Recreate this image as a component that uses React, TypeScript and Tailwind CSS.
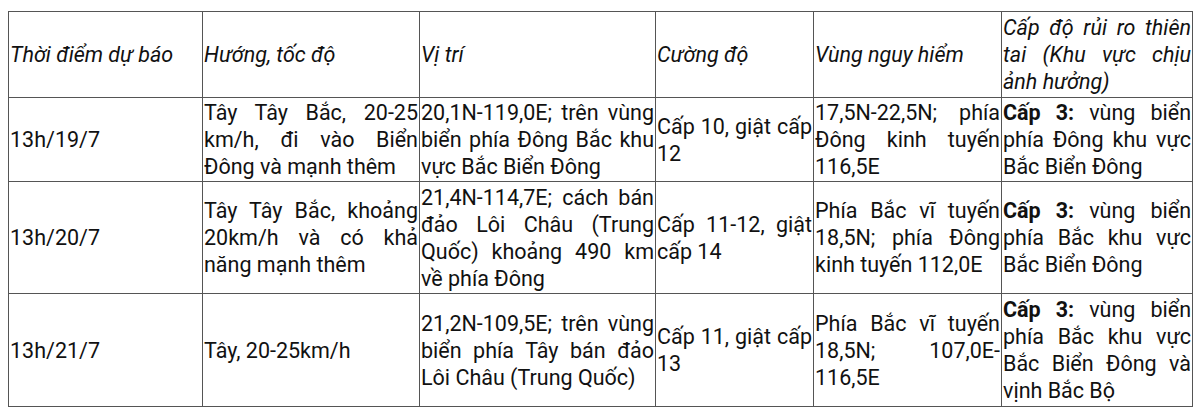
import React from 'react';

const cols = ['w-[194px]', 'w-[217px]', 'w-[236px]', 'w-[158px]', 'w-[188px]', 'w-[191px]'];

const headers = [
  'Thời điểm dự báo',
  'Hướng, tốc độ',
  'Vị trí',
  'Cường độ',
  'Vùng nguy hiểm',
  'Cấp độ rủi ro thiên tai (Khu vực chịu ảnh hưởng)',
];

type Row = {
  h: string;
  time: string;
  dir: string;
  pos: string;
  power: string;
  danger: string;
  risk: string;
};

const rows: Row[] = [
  {
    h: 'h-[84px]',
    time: '13h/19/7',
    dir: 'Tây Tây Bắc, 20-25 km/h, đi vào Biển Đông và mạnh thêm',
    pos: '20,1N-119,0E; trên vùng biển phía Đông Bắc khu vực Bắc Biển Đông',
    power: 'Cấp 10, giật cấp 12',
    danger: '17,5N-22,5N; phía Đông kinh tuyến 116,5E',
    risk: 'vùng biển phía Đông khu vực Bắc Biển Đông',
  },
  {
    h: 'h-[112px]',
    time: '13h/20/7',
    dir: 'Tây Tây Bắc, khoảng 20km/h và có khả năng mạnh thêm',
    pos: '21,4N-114,7E; cách bán đảo Lôi Châu (Trung Quốc) khoảng 490 km về phía Đông',
    power: 'Cấp 11-12, giật cấp 14',
    danger: 'Phía Bắc vĩ tuyến 18,5N; phía Đông kinh tuyến 112,0E',
    risk: 'vùng biển phía Bắc khu vực Bắc Biển Đông',
  },
  {
    h: 'h-[113px]',
    time: '13h/21/7',
    dir: 'Tây, 20-25km/h',
    pos: '21,2N-109,5E; trên vùng biển phía Tây bán đảo Lôi Châu (Trung Quốc)',
    power: 'Cấp 11, giật cấp 13',
    danger: 'Phía Bắc vĩ tuyến 18,5N; 107,0E-116,5E',
    risk: 'vùng biển phía Bắc khu vực Bắc Biển Đông và vịnh Bắc Bộ',
  },
];

const cell = 'border border-[#555] px-[1px] py-0 align-middle text-justify';

export default function App() {
  return (
    <div className="bg-white w-[1200px] h-[411px] pt-[11px] pl-[8px]">
      <table
        className="table-fixed border-collapse w-[1184px] text-[21.5px] leading-[27px] text-[#111]"
        style={{ fontFamily: 'Roboto, "Noto Sans", sans-serif' }}
      >
        <colgroup>
          {cols.map((c, i) => (
            <col key={i} className={c} />
          ))}
        </colgroup>
        <thead>
          <tr className="h-[86px]">
            {headers.map((t, i) => (
              <th key={i} className={`${cell} italic font-normal`}>
                {t}
              </th>
            ))}
          </tr>
        </thead>
        <tbody>
          {rows.map((r) => (
            <tr key={r.time} className={r.h}>
              <td className={cell}>{r.time}</td>
              <td className={cell}>{r.dir}</td>
              <td className={cell}>{r.pos}</td>
              <td className={cell}>{r.power}</td>
              <td className={cell}>{r.danger}</td>
              <td className={cell}>
                <b>Cấp 3:</b> {r.risk}
              </td>
            </tr>
          ))}
        </tbody>
      </table>
    </div>
  );
}
